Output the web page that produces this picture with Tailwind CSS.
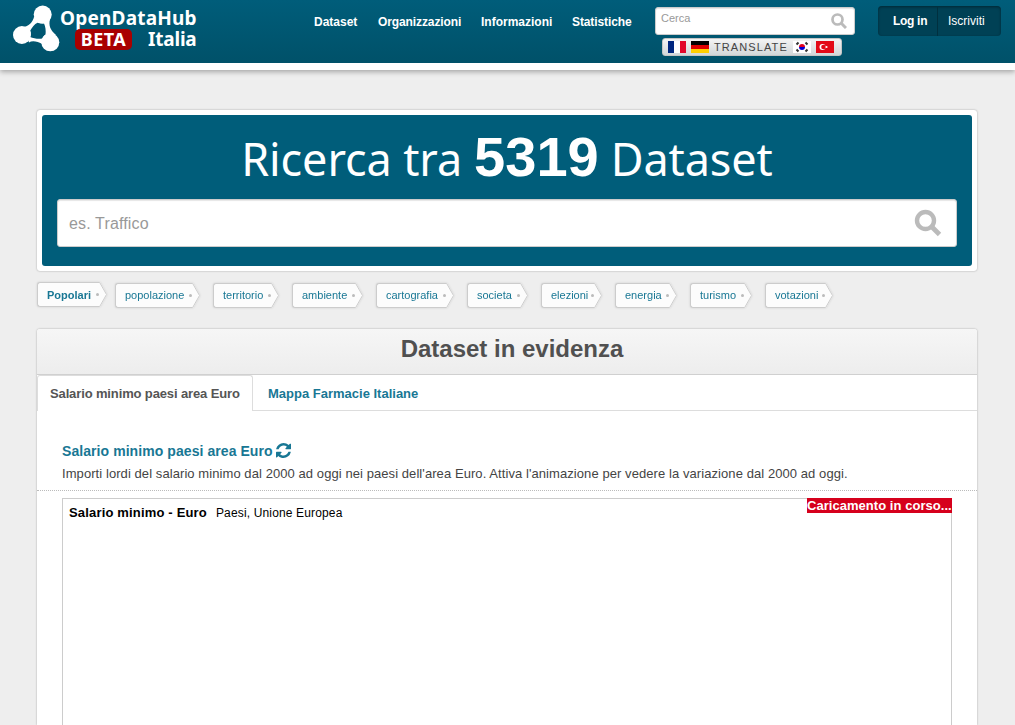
<!DOCTYPE html>
<html lang="it">
<head>
<meta charset="utf-8">
<title>OpenDataHub Italia</title>
<script src="https://cdn.jsdelivr.net/npm/@tailwindcss/browser@4"></script>
</head>
<body class="h-[725px] overflow-hidden bg-[#eeeeee] font-['Liberation_Sans',sans-serif] text-[#444]">
<div class="flex h-[725px] flex-col overflow-hidden">
<header class="flex h-[70px] shrink-0 items-start border-b-[7px] border-white bg-linear-to-b from-[#005d7a] to-[#005169] shadow-[0_2px_5px_rgba(0,0,0,0.3)]">
  <div class="ml-3 mt-[5px] flex w-[302px] text-white">
    <svg class="h-12 w-12 shrink-0" viewBox="0 0 48 48" fill="#fff">
      <path fill-rule="evenodd" d="M22 12C21 17 16.500 21.500 11 22L17 37.500C20 35.500 25 36 31 39.500L44 30C38 25 36.500 20 38 14ZM25.500 17.800C22.500 19 20 22.500 18.300 25.500C19.300 28 19 30.500 18 32C22 33.600 26.500 34.200 30.300 33.500C31 31.500 32.500 30 33.500 29.500C34 26 33.500 21.500 32 18.500C29.500 18.700 27 18.500 25.500 17.800Z"/>
      <circle cx="30.700" cy="9.600" r="9"/><circle cx="9.900" cy="30" r="8.900"/><circle cx="38.300" cy="37.300" r="9"/>
    </svg>
    <div class="w-[142px] font-['Noto_Sans','Open_Sans',sans-serif] font-bold">
      <div class="h-[22px] whitespace-nowrap text-[19px] leading-[26px] tracking-[0.2px]">OpenDataHub</div>
      <div class="flex h-[24px] items-center pl-[15px]">
        <span class="flex h-[21px] w-[57px] items-center justify-center rounded-[5px] bg-[#a90000] text-[18px] leading-5 tracking-[0.5px]">BETA</span>
        <span class="ml-[16px] text-[19px] leading-5 -tracking-[0.2px]">Italia</span>
      </div>
    </div>
  </div>
  <nav class="mt-[14px] flex w-[341px] text-xs font-bold leading-4 text-white">
    <a class="w-16">Dataset</a><a class="w-[103px] -tracking-[0.1px]">Organizzazioni</a><a class="w-[91px]">Informazioni</a><a class="-tracking-[0.1px]">Statistiche</a>
  </nav>
  <div class="mt-[7px] w-[200px]">
    <div class="flex h-7 items-start justify-between rounded-[3px] border border-[#ccc] bg-white pl-[5px] pr-[7px] shadow-[inset_0_1px_1px_rgba(0,0,0,0.1)]">
      <span class="mt-[3px] text-[11px] leading-[14px] text-[#999]">Cerca</span>
      <svg class="mt-[5px] h-4 w-4" viewBox="0 0 16 16" fill="none" stroke="#bbb"><circle cx="6.500" cy="6.500" r="5" stroke-width="2.700"/><path d="M10 10l5 5" stroke-width="3"/></svg>
    </div>
    <div class="ml-[7px] mt-[3px] flex h-[18px] w-[180px] items-center rounded-[3px] border border-[#c5c5c5] bg-linear-to-b from-[#f4f4f4] to-[#d2d7d9] pl-[5px]">
      <svg class="h-3 w-[18px]" viewBox="0 0 18 12"><path fill="#fff" d="M0 0h18v12H0z"/><path fill="#00267f" d="M0 0h6v12H0z"/><path fill="#e2062a" d="M12 0h6v12h-6z"/></svg>
      <svg class="ml-[5px] h-3 w-[18px]" viewBox="0 0 18 12"><path d="M0 0h18v4H0z"/><path fill="#d00" d="M0 4h18v4H0z"/><path fill="#ffce00" d="M0 8h18v4H0z"/></svg>
      <span class="ml-[5px] w-[79px] whitespace-nowrap text-[11px] leading-4 tracking-[1.100px] text-[#444]">TRANSLATE</span>
      <svg class="h-3 w-[18px]" viewBox="0 0 18 12"><path fill="#fff" d="M0 0h18v12H0z"/><path fill="#0000d8" d="M6 6a3 3 0 0 0 6 0z"/><path fill="#e00020" d="M6 6a3 3 0 0 1 6 0z"/><path d="M3.500 3.500 5.500 1.500M12.500 1.500l2 2M3.500 8.500l2 2M12.500 10.500l2-2" stroke="#333" stroke-width="2"/></svg>
      <svg class="ml-[5px] h-3 w-[18px]" viewBox="0 0 18 12"><path fill="#e30a17" d="M0 0h18v12H0z"/><circle cx="6.500" cy="6" r="3" fill="#fff"/><circle cx="7.500" cy="6" r="2.300" fill="#e30a17"/><circle cx="10.500" cy="6" r="1.100" fill="#fff"/></svg>
    </div>
  </div>
  <div class="ml-[23px] mt-[6px] flex h-[30px] w-[123px] rounded-[4px] bg-[#004155] text-xs leading-[30px] text-white shadow-[inset_0_1px_3px_rgba(0,0,0,0.4)]">
    <a class="w-[60px] border-r border-[#00303f] pl-[15px] font-bold -tracking-[0.3px]">Log in</a><a class="pl-[10px]">Iscriviti</a>
  </div>
</header>

<main class="ml-[37px] mt-10 flex min-h-0 w-[940px] grow flex-col">
  <section class="h-[161px] shrink-0 rounded-[3px] bg-white p-[5px] shadow-[0_0_2px_rgba(0,0,0,0.35)]">
    <div class="h-[151px] rounded-[3px] bg-[#005d7a] px-[15px]">
      <h1 class="flex h-[84px] items-baseline justify-center whitespace-nowrap font-['Noto_Sans','Open_Sans',sans-serif] text-[45px] font-normal leading-[84px] text-white"><span class="-tracking-[0.1px]">Ricerca tra</span><b class="mx-3 font-['Liberation_Sans',sans-serif] text-[56px] font-bold">5319</b><span class="-tracking-[0.1px]">Dataset</span></h1>
      <div class="flex h-12 items-center justify-between rounded-[3px] border border-[#ccc] bg-white pl-[11px] pr-[14px] shadow-[inset_0_1px_1px_rgba(0,0,0,0.1)]">
        <span class="pt-px text-base tracking-[0.15px] text-[#999]">es. Traffico</span>
        <svg class="h-7 w-7" viewBox="0 0 28 28" fill="none" stroke="#bbb"><circle cx="11.500" cy="11.500" r="8.500" stroke-width="4.400"/><path d="M17.500 17.500l8 8" stroke-width="4.800"/></svg>
      </div>
    </div>
  </section>

  <ul id="tags" class="mt-3 flex h-[25px] shrink-0 gap-[13px] text-[11px] leading-[24px] text-[#187794]"></ul>

  <section class="mt-[21px] flex min-h-0 grow flex-col rounded-t-[3px] bg-white shadow-[0_0_2px_rgba(0,0,0,0.35)]">
    <h2 class="h-[46px] shrink-0 rounded-t-[3px] border-b border-[#d0d0d0] bg-linear-to-b from-[#f6f6f6] to-[#ededed] pl-[10px] text-center text-2xl font-bold leading-10 text-[#505050]">Dataset in evidenza</h2>
    <div class="flex h-9 shrink-0 text-[13px] font-bold leading-[36px]">
      <a class="w-[216px] whitespace-nowrap rounded-t-[3px] border border-b-0 border-[#ddd] pl-3 -tracking-[0.13px] text-[#555]">Salario minimo paesi area Euro</a>
      <a class="grow border-b border-[#ddd] pl-[15px] pt-px text-[#187794]">Mappa Farmacie Italiane</a>
    </div>
    <div class="h-20 shrink-0 border-b border-dotted border-[#bbb] pl-[25px] pt-[30px]">
      <h3 class="flex h-5 items-center gap-[3px] text-sm font-bold leading-5 tracking-[0.07px] text-[#187794]">Salario minimo paesi area Euro
        <svg class="mb-[2px] h-[15px] w-[15px]" viewBox="0 0 1536 1536" fill="currentColor"><path d="M1511 928q0 5-1 7-64 268-268 434.500T764 1536q-146 0-282.500-55T238 1324l-129 129q-19 19-45 19t-45-19-19-45V960q0-26 19-45t45-19h448q26 0 45 19t19 45-19 45l-137 137q71 66 161 102t187 36q134 0 250-65t186-179q11-17 53-117 8-23 30-23h192q13 0 22.500 9.500t9.500 22.500zM1536 128v448q0 26-19 45t-45 19h-448q-26 0-45-19t-19-45 19-45l138-138Q969 256 768 256q-134 0-250 65T332 500q-11 17-53 117-8 23-30 23H50q-13 0-22.500-9.500T18 608v-7q65-268 270-434.500T768 0q146 0 284 55.500T1297 212l130-129q19-19 45-19t45 19 19 45z"/></svg>
      </h3>
      <p class="mt-[3px] whitespace-nowrap text-[13px] leading-5 tracking-[0.075px]">Importi lordi del salario minimo dal 2000 ad oggi nei paesi dell'area Euro. Attiva l'animazione per vedere la variazione dal 2000 ad oggi.</p>
    </div>
    <div class="ml-[25px] mt-[7px] flex min-h-0 w-[890px] grow items-start border border-b-0 border-[#ccc] pl-[6px] text-black">
      <b class="mt-[6px] text-[13px] leading-4 tracking-[0.17px]">Salario minimo - Euro</b>
      <span class="ml-[9px] mt-[6px] text-xs leading-4 tracking-[0.15px]">Paesi, Unione Europea</span>
      <b class="-mr-px -mt-px ml-auto h-[15px] w-[145px] whitespace-nowrap bg-[#d6001c] text-[13px] leading-[15px] tracking-[0.04px] text-white">Caricamento in corso...</b>
    </div>
  </section>
</main>
</div>
<script>
const tags = [["Popolari",70],["popolazione",85],["territorio",66],["ambiente",71],["cartografia",78],["societa",61],["elezioni",61],["energia",62],["turismo",62],["votazioni",68]];
document.getElementById("tags").innerHTML = tags.map(([name, width], i) => `
<li class="flex h-[25px] drop-shadow-[0_0_1px_rgba(0,0,0,0.12)] ${i ? "" : "-mr-[5px] -mt-px font-bold"}" style="width:${width}px">
<a class="grow whitespace-nowrap rounded-l-[3px] border border-r-0 border-[#ccc] bg-[#fcfcfc] pl-[9px] ${i ? "leading-[23px]" : "leading-[25px]"}">${name}</a>
<svg class="h-[25px] w-[13px] shrink-0" viewBox="0 0 13 25"><path d="M0 0h6l7 12.500-7 12.500H0z" fill="#fcfcfc"/><path d="M0 .5h5.700L12.500 12.500 5.700 24.500H0" fill="none" stroke="#ccc"/><circle cx="3.500" cy="12.500" r="1.500" fill="#bbb"/></svg></li>`).join("");
</script>
</body>
</html>
